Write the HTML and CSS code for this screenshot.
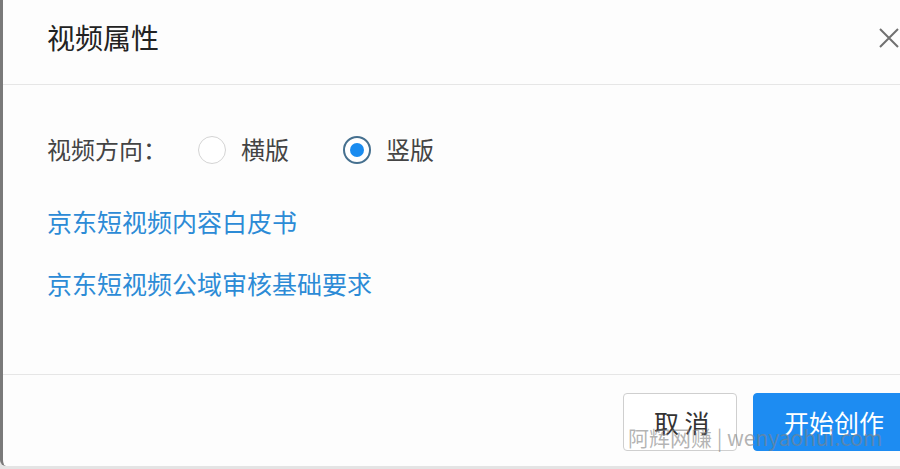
FILE: index.html
```html
<!DOCTYPE html>
<html lang="zh-CN">
<head>
    <meta charset="UTF-8">
    <meta name="viewport" content="width=device-width, initial-scale=1.0">
    <title>视频属性</title>
    <link rel="stylesheet" href="styles.css">
</head>
<body>

    <div class="modal">
        <div class="modal-header">
            <h2>视频属性</h2>
            <span class="close">
                <svg width="22" height="22" viewBox="0 0 22 22">
                    <path d="M2 2 L20 20 M20 2 L2 20" stroke="#707070" stroke-width="2" fill="none"/>
                </svg>
            </span>
        </div>

        <div class="modal-body">
            <div class="field">
                <span class="field-label">视频方向：</span>
                <label class="radio"><span class="radio-dot"></span>横版</label>
                <label class="radio checked"><span class="radio-dot"></span>竖版</label>
            </div>
            <a class="doc-link first" href="#">京东短视频内容白皮书</a>
            <a class="doc-link" href="#">京东短视频公域审核基础要求</a>
        </div>

        <div class="modal-footer">
            <button class="btn">取 消</button>
            <button class="btn primary">开始创作</button>
            <span class="watermark">阿辉网赚 | wenyaohui.com</span>
        </div>
    </div>

</body>
</html>
```

FILE: styles.css
```css
body {
    margin: 0;
    background-color: #e4e4e4;
    font-family: "Noto Sans CJK SC", "Noto Sans", sans-serif;
    color: #333;
    overflow: hidden;
}

.modal {
    position: relative;
    width: 930px;
    height: 466px;
    background-color: #fdfdfd;
    border-left: 3px solid #7a7a7a;
    border-radius: 0 0 0 6px;
    box-sizing: border-box;
    display: flex;
    flex-direction: column;
}

.modal-header {
    height: 85px;
    border-bottom: 1px solid #e6e6e6;
    box-sizing: border-box;
    display: flex;
    align-items: flex-start;
    padding: 16px 0 0 44px;
    position: relative;
}

h2 {
    margin: 0;
    font-size: 28px;
    font-weight: normal;
    line-height: 42px;
    color: #222;
}

.close {
    position: absolute;
    left: 875px;
    top: 27px;
    width: 22px;
    height: 22px;
}

.modal-body {
    height: 290px;
    border-bottom: 1px solid #e6e6e6;
    box-sizing: border-box;
    padding: 43px 0 0 44px;
    display: flex;
    flex-direction: column;
    align-items: flex-start;
}

.field {
    display: flex;
    align-items: center;
    height: 40px;
    font-size: 24px;
    color: #444;
}

.field-label {
    width: 151px;
}

.radio {
    display: flex;
    align-items: center;
    gap: 15px;
    margin-right: 54px;
}

.radio-dot {
    width: 28px;
    height: 28px;
    border: 1px solid #d4d4d4;
    border-radius: 50%;
    box-sizing: border-box;
    margin-top: 4px;
    display: flex;
    align-items: center;
    justify-content: center;
    background-color: #fff;
}

.radio.checked .radio-dot {
    border: 2px solid #46708f;
}

.radio.checked .radio-dot::after {
    content: "";
    width: 14px;
    height: 14px;
    border-radius: 50%;
    background-color: #1a8cf0;
}

.doc-link {
    font-size: 25px;
    line-height: 40px;
    color: #2c8bd6;
    text-decoration: none;
    margin-top: 22px;
}

.doc-link.first {
    margin-top: 33px;
}

.modal-footer {
    flex: 1;
    display: flex;
    align-items: flex-start;
    padding: 18px 0 0 620px;
    gap: 16px;
    position: relative;
}

.btn {
    height: 58px;
    padding: 0 30px;
    border: 1px solid #cfcfcf;
    border-radius: 4px;
    background-color: #fff;
    color: #333;
    font-family: inherit;
    font-size: 25px;
    cursor: pointer;
    width: 114px;
    white-space: nowrap;
}

.btn.primary {
    background-color: #1d8cf2;
    border-color: #1d8cf2;
    color: #fff;
    width: 160px;
    text-align: left;
}

.watermark {
    position: absolute;
    left: 625px;
    top: 47px;
    font-size: 21px;
    color: rgba(130, 130, 130, 0.6);
    white-space: nowrap;
}
```
